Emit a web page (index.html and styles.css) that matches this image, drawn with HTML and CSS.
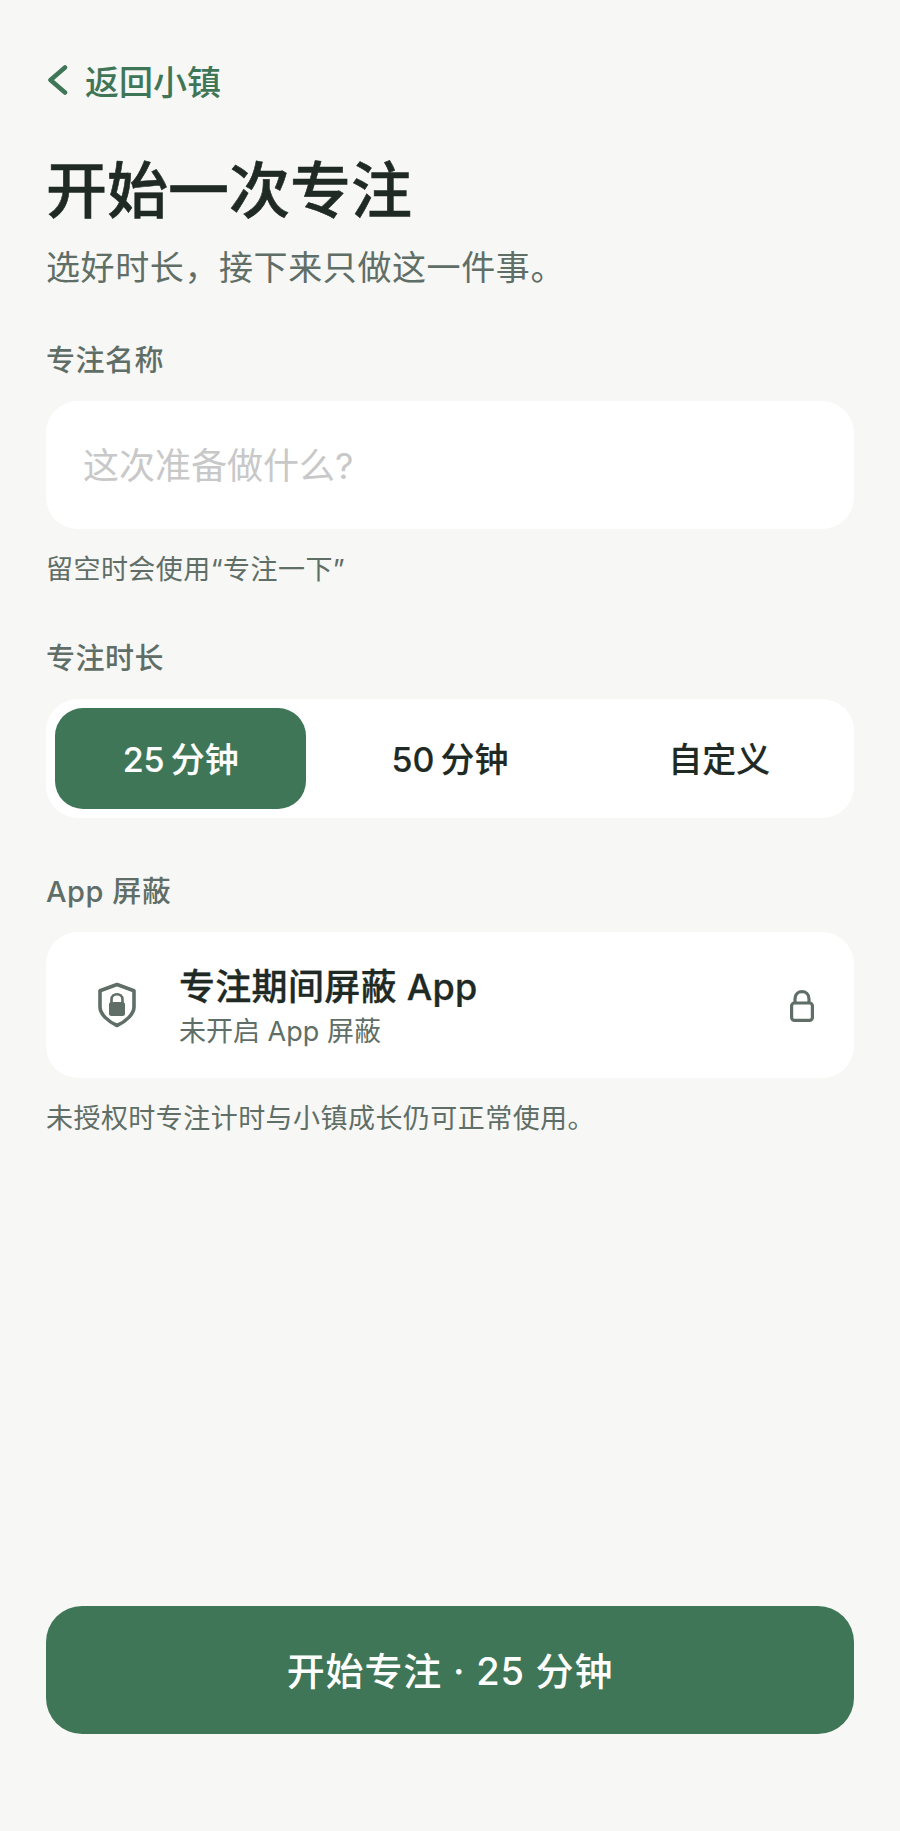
FILE: index.html
```html
<!DOCTYPE html>
<html lang="zh-CN">
<head>
    <meta charset="UTF-8">
    <meta name="viewport" content="width=device-width, initial-scale=1.0">
    <title>开始一次专注</title>
    <link rel="stylesheet" href="styles.css">
</head>
<body>
    <div class="page">
        <a class="back-link" href="#">
            <svg class="back-icon" width="22" height="32" viewBox="0 0 22 32" fill="none">
                <path d="M19 3.5 L4.5 16 L19 28.5" stroke="currentColor" stroke-width="4.5" stroke-linecap="round" stroke-linejoin="round"/>
            </svg>
            <span>返回小镇</span>
        </a>

        <h1 class="page-title">开始一次专注</h1>
        <p class="page-subtitle">选好时长，接下来只做这一件事。</p>

        <div class="field-label name-label">专注名称</div>
        <input class="name-input" type="text" placeholder="这次准备做什么?">
        <p class="hint name-hint">留空时会使用“专注一下”</p>

        <div class="field-label duration-label">专注时长</div>
        <div class="segments">
            <button class="segment active">25<span class="unit">分钟</span></button>
            <button class="segment">50<span class="unit">分钟</span></button>
            <button class="segment">自定义</button>
        </div>

        <div class="field-label block-label">App 屏蔽</div>
        <div class="block-card">
            <svg class="shield-icon" width="38" height="46" viewBox="0 0 38 46" fill="none">
                <path d="M19 2.5 L36 8.8 V25 C36 32 28 39.5 19 43.5 C10 39.5 2 32 2 25 V8.8 Z" stroke="#5f6e66" stroke-width="3.6" stroke-linejoin="round"/>
                <path d="M13.5 21 V17.5 C13.5 10.5 24.5 10.5 24.5 17.5 V21" stroke="#5f6e66" stroke-width="2.6"/>
                <rect x="11" y="20" width="16" height="14" rx="2.5" fill="#5f6e66"/>
            </svg>
            <div class="block-text">
                <div class="block-title">专注期间屏蔽 App</div>
                <div class="block-status">未开启 App 屏蔽</div>
            </div>
            <svg class="lock-icon" width="24" height="32" viewBox="0 0 24 32" fill="none">
                <path d="M5 13 V9 C5 -0.8 19 -0.8 19 9 V13" stroke="#5f6e66" stroke-width="3.2"/>
                <rect x="1.6" y="13" width="20.8" height="17.4" rx="3" stroke="#5f6e66" stroke-width="3.2"/>
            </svg>
        </div>
        <p class="hint block-hint">未授权时专注计时与小镇成长仍可正常使用。</p>

        <button class="start-btn">开始专注 · 25 分钟</button>
    </div>
</body>
</html>
```

FILE: styles.css
```css
* {
    box-sizing: border-box;
}
body {
    margin: 0;
    background-color: #f7f7f5;
    color: #1f2a24;
    font-family: Inter, 'Noto Sans CJK SC', sans-serif;
}
.page {
    display: flex;
    flex-direction: column;
    min-height: 1831px;
    padding: 62px 46px 97px;
}
.back-link {
    display: flex;
    align-items: center;
    gap: 17px;
    height: 36px;
    color: #3f7657;
    font-size: 34px;
    font-weight: 500;
    text-decoration: none;
}
.back-icon {
    flex-shrink: 0;
}
.page-title {
    margin: 54px 0 0;
    font-size: 61px;
    line-height: 78px;
    font-weight: 500;
    -webkit-text-stroke: 0.6px #1f2a24;
}
.page-subtitle {
    margin: 16px 0 0;
    color: #5f6e66;
    font-size: 34px;
    letter-spacing: 0.6px;
    line-height: 44px;
}
.field-label {
    color: #5f6e66;
    font-size: 29px;
    font-weight: 500;
    letter-spacing: 0.5px;
    line-height: 38px;
}
.name-label {
    margin-top: 52px;
}
.duration-label {
    margin-top: 51px;
}
.block-label {
    margin-top: 55px;
}
.name-input {
    display: block;
    width: 100%;
    height: 128px;
    margin-top: 21px;
    padding: 2px 37px 0;
    border: none;
    border-radius: 32px;
    background-color: #fff;
    color: #1f2a24;
    font-family: inherit;
    font-size: 36px;
    outline: none;
}
.name-input::placeholder {
    color: #c8c8c8;
    opacity: 1;
}
.hint {
    margin: 0;
    color: #5f6e66;
    font-size: 27px;
    letter-spacing: 0.45px;
    line-height: 38px;
}
.name-hint {
    margin-top: 22px;
}
.block-hint {
    margin-top: 22px;
}
.segments {
    display: grid;
    grid-template-columns: repeat(3, 1fr);
    gap: 18px;
    height: 119px;
    margin-top: 21px;
    padding: 9px;
    border-radius: 32px;
    background-color: #fff;
}
.segment {
    padding: 0 0 2px;
    border: none;
    border-radius: 28px;
    background: none;
    color: #1f2a24;
    font-family: inherit;
    font-size: 34px;
    font-weight: 500;
    -webkit-text-stroke: 0.15px currentColor;
}
.segment.active {
    background-color: #3f7657;
    color: #fff;
}
.unit {
    margin-left: 6px;
}
.block-card {
    display: flex;
    align-items: center;
    height: 146px;
    margin-top: 21px;
    padding: 0 40px 0 52px;
    border-radius: 32px;
    background-color: #fff;
}
.block-text {
    flex: 1;
    margin-left: 43px;
    padding-top: 3px;
}
.block-title {
    font-size: 36px;
    font-weight: 500;
    letter-spacing: 0.3px;
    line-height: 46px;
    -webkit-text-stroke: 0.3px #1f2a24;
}
.block-status {
    margin-top: 4px;
    color: #5f6e66;
    font-size: 27px;
    line-height: 36px;
}
.lock-icon {
    margin-top: 2px;
}
.start-btn {
    height: 128px;
    margin-top: auto;
    padding: 0 0 4px;
    border: none;
    border-radius: 36px;
    background-color: #3f7657;
    color: #fff;
    font-family: inherit;
    font-size: 38px;
    font-weight: 500;
    letter-spacing: 0.8px;
}
```
